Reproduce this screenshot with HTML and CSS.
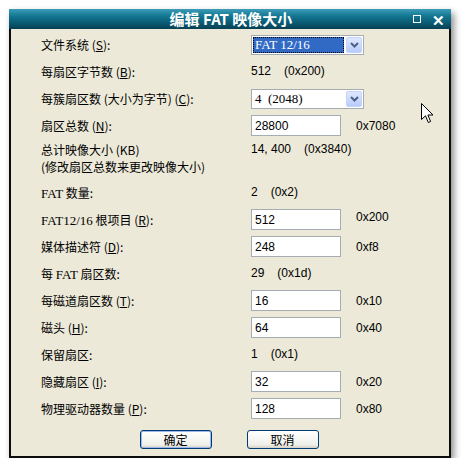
FILE: index.html
```html
<!DOCTYPE html>
<html lang="zh-CN">
<head>
    <meta charset="UTF-8">
    <title>编辑 FAT 映像大小</title>
    <link rel="stylesheet" href="styles.css">
</head>
<body>
    <div class="window">
        <div class="titlebar">
            <span class="title">编辑 FAT 映像大小</span>
            <span class="tb-btn tb-max"></span>
            <span class="tb-btn tb-close">&#x2715;</span>
        </div>
        <div class="content">
            <div class="row">
                <label>文件系统 (<u>S</u>):</label>
                <div class="select focus"><span class="sel-text"><span class="hl">FAT 12/16</span></span><span class="sel-btn"><svg width="9" height="6" viewBox="0 0 9 6"><path d="M1 1 L4.5 4.5 L8 1" fill="none" stroke="#4d6185" stroke-width="2"/></svg></span></div>
            </div>
            <div class="row">
                <label>每扇区字节数 (<u>B</u>):</label>
                <span class="val">512<span class="hex-in">(0x200)</span></span>
            </div>
            <div class="row">
                <label>每簇扇区数 (大小为字节) (<u>C</u>):</label>
                <div class="select"><span class="sel-text">4 &nbsp;(2048)</span><span class="sel-btn"><svg width="9" height="6" viewBox="0 0 9 6"><path d="M1 1 L4.5 4.5 L8 1" fill="none" stroke="#4d6185" stroke-width="2"/></svg></span></div>
            </div>
            <div class="row">
                <label>扇区总数 (<u>N</u>):</label>
                <input class="field" type="text" value="28800">
                <span class="hex">0x7080</span>
            </div>
            <div class="row tall">
                <label>总计映像大小 (KB)<br>(修改扇区总数来更改映像大小)</label>
                <span class="val">14, 400<span class="hex-in">(0x3840)</span></span>
            </div>
            <div class="row">
                <label><span class="latin">FAT</span> 数量:</label>
                <span class="val">2<span class="hex-in">(0x2)</span></span>
            </div>
            <div class="row">
                <label><span class="latin">FAT12/16</span> 根项目 (<u>R</u>):</label>
                <input class="field" type="text" value="512">
                <span class="hex up">0x200</span>
            </div>
            <div class="row">
                <label>媒体描述符 (<u>D</u>):</label>
                <input class="field" type="text" value="248">
                <span class="hex">0xf8</span>
            </div>
            <div class="row">
                <label>每 <span class="latin">FAT</span> 扇区数:</label>
                <span class="val">29<span class="hex-in">(0x1d)</span></span>
            </div>
            <div class="row">
                <label>每磁道扇区数 (<u>T</u>):</label>
                <input class="field" type="text" value="16">
                <span class="hex">0x10</span>
            </div>
            <div class="row">
                <label>磁头 (<u>H</u>):</label>
                <input class="field" type="text" value="64">
                <span class="hex">0x40</span>
            </div>
            <div class="row">
                <label>保留扇区:</label>
                <span class="val">1<span class="hex-in">(0x1)</span></span>
            </div>
            <div class="row">
                <label>隐藏扇区 (<u>I</u>):</label>
                <input class="field" type="text" value="32">
                <span class="hex">0x20</span>
            </div>
            <div class="row">
                <label>物理驱动器数量 (<u>P</u>):</label>
                <input class="field" type="text" value="128">
                <span class="hex">0x80</span>
            </div>
            <div class="buttons">
                <button class="btn default">确定</button>
                <button class="btn">取消</button>
            </div>
        </div>
    </div>

    <!-- mouse pointer -->
    <svg class="cursor" width="13" height="21" viewBox="0 0 13 21">
        <path d="M0.5 0.5 L0.5 16.5 L4.5 12.8 L7.3 19.5 L9.6 18.5 L6.9 12 L12 12 Z" fill="#fff" stroke="#000" stroke-width="1"/>
    </svg>
</body>
</html>
```

FILE: styles.css
```css
body {
    margin: 0;
    background-color: #fff;
    font-family: "Noto Sans CJK SC", "Liberation Sans", sans-serif;
    font-size: 12px;
    color: #000;
}
.window {
    margin: 9px 0 0 9px;
    width: 442px;
    height: 449px;
    box-shadow: 3px 4px 7px rgba(0, 0, 0, 0.45);
    display: flex;
    flex-direction: column;
}
.titlebar {
    height: 20px;
    background: linear-gradient(#3d9db8, #137792 35%, #0b5a72 70%, #063f52);
    display: flex;
    align-items: center;
    color: #fff;
}
.title {
    flex: 1;
    text-align: center;
    font-weight: bold;
    font-size: 15px;
    line-height: 20px;
    padding-left: 40px;
}
.tb-btn {
    display: inline-block;
}
.tb-max {
    width: 6px;
    height: 6px;
    border: 1px solid #fff;
    margin-right: 11px;
}
.tb-close {
    font-weight: bold;
    font-size: 15px;
    line-height: 15px;
    margin-right: 6px;
}
.content {
    flex: 1;
    background-color: #ece9d8;
    border: 2px solid #0c0c0c;
    border-top: none;
    padding: 2px 0 0 30px;
}
.row {
    height: 27px;
    display: flex;
    align-items: center;
}
.row label {
    width: 210px;
    flex-shrink: 0;
    line-height: 17px;
}
.latin {
    font-family: "Liberation Serif", serif;
    font-size: 13px;
}
.row.tall {
    height: 40px;
    align-items: flex-start;
    padding-top: 2px;
    box-sizing: border-box;
}
.val {
    font-family: "Liberation Sans", "Noto Sans CJK SC", sans-serif;
    line-height: 17px;
}
.hex-in {
    margin-left: 13px;
}
.hex {
    margin-left: 15px;
    font-family: "Liberation Sans", sans-serif;
}
.hex.up {
    margin-top: -6px;
}
.field {
    width: 90px;
    height: 21px;
    box-sizing: border-box;
    border: 1px solid #a5acb2;
    background-color: #fff;
    padding: 0 3px;
    font-family: "Liberation Sans", sans-serif;
    font-size: 12px;
    margin: 0;
}
.select {
    width: 113px;
    height: 20px;
    box-sizing: border-box;
    border: 1px solid #a5acb2;
    background-color: #fff;
    display: flex;
    align-items: center;
    padding: 1px;
}
.sel-text {
    flex: 1;
    height: 16px;
    line-height: 16px;
    padding-left: 2px;
    font-family: "Liberation Serif", serif;
    font-size: 13px;
}
.select.focus .sel-text {
    background-color: #316ac5;
    color: #fff;
    outline: 1px dotted #000;
    outline-offset: -1px;
    margin-right: 2px;
}
.sel-btn {
    width: 16px;
    height: 16px;
    box-sizing: border-box;
    border: 1px solid #c3d3fd;
    border-radius: 2px;
    background: linear-gradient(#dfe8fe, #b7cbfa);
    display: flex;
    align-items: center;
    justify-content: center;
}
.buttons {
    display: flex;
    justify-content: center;
    gap: 35px;
    margin-top: 8px;
    margin-left: -32px;
}
.btn {
    width: 72px;
    height: 19px;
    padding: 0;
    font-family: "Noto Sans CJK SC", sans-serif;
    font-size: 12px;
    line-height: 16px;
    background: linear-gradient(#ffffff, #f0f0ea 80%, #d6d0c5);
    border: 1px solid #003c74;
    border-radius: 3px;
}
.btn.default {
    box-shadow: inset 0 0 0 1px #9cb7e8;
}
.cursor {
    position: absolute;
    left: 421px;
    top: 103px;
}
```
